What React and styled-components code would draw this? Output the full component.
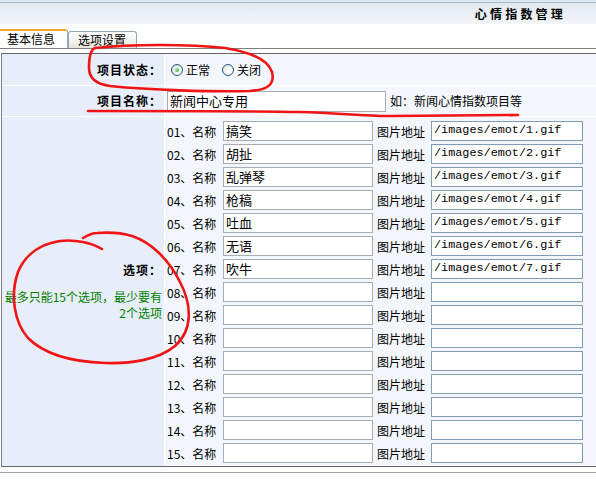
import React from 'react';
import styled, { createGlobalStyle, css } from 'styled-components';

const Global = createGlobalStyle`
  html, body { margin: 0; padding: 0; background: #fff; }
  body {
    font-family: "Noto Sans CJK SC", "DejaVu Sans", sans-serif;
    font-size: 12px;
    color: #000;
  }
  * { box-sizing: border-box; }
`;

const Page = styled.div`
  position: relative;
  width: 596px;
  height: 493px;
  overflow: hidden;
`;

const Header = styled.div`
  height: 24px;
  padding-top: 2px;
  background: #dde7f0;
`;

const HeaderInner = styled.div`
  height: 22px;
  border-top: 1px solid #a4bbcf;
  background: linear-gradient(#e1e9f1, #f3f6f9);
  display: flex;
  align-items: center;
  justify-content: flex-end;
  padding-right: 30px;
  font-weight: bold;
  letter-spacing: 3.2px;
  line-height: 1;
`;

const TabBar = styled.div`
  height: 25px;
  border-bottom: 1px solid #808080;
  display: flex;
  align-items: flex-end;
`;

const Tab = styled.div`
  display: flex;
  align-items: center;
  line-height: 14px;
  ${p => p.$active ? css`
    height: 19px;
    width: 68px;
    padding: 0 0 2px 7px;
    background: #fff;
    border-top: 2px solid #f3a42a;
    border-right: 1px solid #9aa8b0;
    border-radius: 0 3px 0 0;
  ` : css`
    height: 17px;
    width: 69px;
    padding: 0 0 1px 9px;
    background: linear-gradient(#ffffff, #f3f2ee 60%, #e6e4dc);
    border: 1px solid #92a8b6;
    border-bottom: none;
    border-radius: 3px 3px 0 0;
  `}
`;

const Form = styled.div`
  margin: 4px 0 0 1px;
  border-left: 1px solid #808080;
  border-top: 1px solid #666;
  border-bottom: 1px solid #666;
  background: #fff;
  display: grid;
  grid-template-columns: 162px 1fr;
  grid-template-rows: 31px 30px 349px;
  gap: 1px;
`;

const LabelCell = styled.div`
  background: #e7eef9;
  display: flex;
  flex-direction: column;
  justify-content: center;
  align-items: flex-end;
  text-align: right;
  padding-right: 2px;
  line-height: 16px;
`;

const Bold = styled.span`
  font-weight: bold;
  letter-spacing: 1px;
`;

const Hint = styled.div`
  color: #008000;
  margin-top: 11px;
  line-height: 16px;
`;

const ValueCell = styled.div`
  background: #f3f7fd;
  display: flex;
  align-items: ${p => (p.$top ? 'flex-start' : 'center')};
  padding-left: 2px;
`;

const RadioGroup = styled.div`
  display: flex;
  align-items: center;
  gap: 12px;
  padding-left: 4px;
`;

const RadioLabel = styled.label`
  display: flex;
  align-items: center;
  gap: 3px;
  line-height: 14px;
`;

const RadioDot = styled.span`
  position: relative;
  display: inline-block;
  width: 12px;
  height: 12px;
  border-radius: 50%;
  border: 1px solid #24578a;
  background: radial-gradient(circle at 65% 65%, #ffffff 0%, #f2f2ef 45%, #d3d3cc 100%);
  ${p => p.$checked && css`
    &::after {
      content: '';
      position: absolute;
      left: 3px;
      top: 3px;
      width: 4px;
      height: 4px;
      border-radius: 50%;
      background: radial-gradient(circle at 35% 35%, #a6ea9e, #1f9e22);
    }
  `}
`;

const TextInput = styled.input`
  height: ${p => p.$h || 20}px;
  width: ${p => p.$w}px;
  margin: 0;
  padding: 0 2px 2px;
  border: 1px solid ${p => (p.$blue ? '#7f9db9' : '#a5acb2')};
  background: #fff;
  font-family: ${p => (p.$mono ? '"Liberation Mono", "Noto Sans CJK SC", monospace' : '"Noto Sans CJK SC", sans-serif')};
  font-size: ${p => (p.$mono ? '11.8px' : '13px')};
  color: #000;
  outline: none;
`;

const NameHint = styled.span`
  margin-left: 4px;
  line-height: 14px;
`;

const OptionGrid = styled.div`
  display: grid;
  grid-template-columns: 56px 150px 58px 152px;
  grid-auto-rows: 20px;
  row-gap: 3px;
  align-items: center;
  padding-top: 4px;
`;

const OptLabel = styled.span`
  line-height: 14px;
  padding-top: 2px;
  padding-left: ${p => (p.$indent ? '4px' : '0')};
`;

const Footer = styled.div`
  margin-top: 5px;
  border-top: 1px solid #a0a0a0;
`;

const Overlay = styled.svg`
  position: absolute;
  left: 0;
  top: 0;
  pointer-events: none;
`;

const options = [
  ['搞笑', '/images/emot/1.gif'],
  ['胡扯', '/images/emot/2.gif'],
  ['乱弹琴', '/images/emot/3.gif'],
  ['枪稿', '/images/emot/4.gif'],
  ['吐血', '/images/emot/5.gif'],
  ['无语', '/images/emot/6.gif'],
  ['吹牛', '/images/emot/7.gif'],
  ...Array.from({ length: 8 }, () => ['', '']),
];

export default function App() {
  return (
    <Page>
      <Global />
      <Header>
        <HeaderInner>心情指数管理</HeaderInner>
      </Header>
      <TabBar>
        <Tab $active>基本信息</Tab>
        <Tab>选项设置</Tab>
      </TabBar>
      <Form>
        <LabelCell><Bold>项目状态：</Bold></LabelCell>
        <ValueCell>
          <RadioGroup>
            <RadioLabel><RadioDot $checked />正常</RadioLabel>
            <RadioLabel><RadioDot />关闭</RadioLabel>
          </RadioGroup>
        </ValueCell>

        <LabelCell><Bold>项目名称：</Bold></LabelCell>
        <ValueCell>
          <TextInput $w={219} $h={21} readOnly defaultValue="新闻中心专用" />
          <NameHint>如：新闻心情指数项目等</NameHint>
        </ValueCell>

        <LabelCell>
          <Bold>选项：</Bold>
          <Hint>最多只能15个选项，最少要有<br />2个选项</Hint>
        </LabelCell>
        <ValueCell $top>
          <OptionGrid>
            {options.map(([name, url], i) => (
              <React.Fragment key={i}>
                <OptLabel>{String(i + 1).padStart(2, '0')}、名称</OptLabel>
                <TextInput $w={150} readOnly defaultValue={name} />
                <OptLabel $indent>图片地址</OptLabel>
                <TextInput $w={152} $blue $mono readOnly defaultValue={url} />
              </React.Fragment>
            ))}
          </OptionGrid>
        </ValueCell>
      </Form>
      <Footer />
      <Overlay width="596" height="493" viewBox="0 0 596 493">
        <g fill="none" stroke="#f01414" strokeWidth="2.6" strokeLinecap="round" strokeLinejoin="round">
          <path d="M 95 48 C 130 44, 190 44, 225 48 C 250 52, 268 60, 272 72 C 275 84, 268 90, 250 91 C 210 92, 150 90, 110 86 C 95 84, 89 78, 89 68 C 89 58, 90 50, 95 48 Z" />
          <path d="M 88 111 C 150 111, 250 111, 300 112 C 340 113, 360 116, 390 116 C 440 116, 490 115, 518 115" />
          <path d="M 83 238 C 88 235, 92 233, 97 233 C 110 232, 122 233, 132 236 C 150 242, 168 258, 180 282 C 192 305, 193 330, 175 346 C 158 360, 130 364, 105 363 C 75 362, 45 355, 28 338 C 14 322, 10 295, 18 272 C 25 255, 40 244, 60 241 C 75 239, 92 243, 102 249" />
        </g>
      </Overlay>
    </Page>
  );
}
